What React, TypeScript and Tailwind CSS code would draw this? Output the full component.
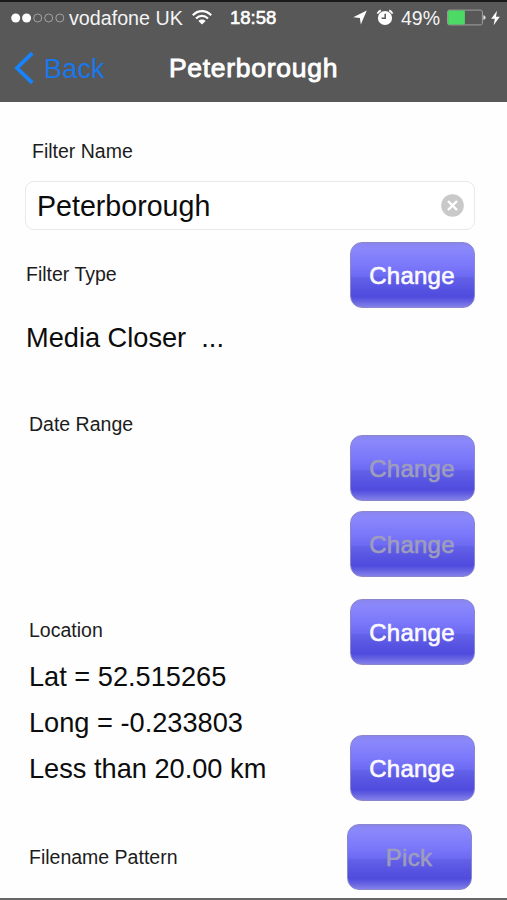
import React, { useState } from 'react';

interface GlossButtonProps {
  label: string;
  disabled?: boolean;
}

const GlossButton: React.FC<GlossButtonProps> = ({ label, disabled }) => (
  <button
    type="button"
    disabled={disabled}
    className={`h-[66px] w-[125px] shrink-0 rounded-[12px] border border-[#8b87cd] bg-[linear-gradient(to_bottom,#8985ee_0%,#8b88fb_8%,#7b78fb_35%,#6e6bf4_51%,#6360e8_55%,#5450e0_76%,#504bdd_84%,#6461e2_91%,#8380ea_100%)] pr-px pt-[2px] text-[24px] leading-none tracking-[0.25px] ${
      disabled
        ? 'text-[#9e9dbd] [-webkit-text-stroke:0.6px_#9e9dbd]'
        : 'text-[#fafaff] [-webkit-text-stroke:0.6px_#fafaff]'
    }`}
  >
    {label}
  </button>
);

const Label: React.FC<{ children: React.ReactNode }> = ({ children }) => (
  <div className="h-[30px] text-[19.5px] leading-[30px] text-[#1c1c1c]">{children}</div>
);

const Value: React.FC<{ children: React.ReactNode }> = ({ children }) => (
  <div className="h-[46px] whitespace-pre text-[27.2px] leading-[46px] text-[#0c0c0c]">{children}</div>
);

const StatusBar: React.FC = () => (
  <div className="flex h-[31px] items-center pl-[11px] pr-[7px] text-[#f4f4f4]">
    <svg className="h-[10px] w-[55px]" viewBox="0 0 55 10">
      <circle cx="4.7" cy="5" r="4.5" fill="#fff" />
      <circle cx="15.6" cy="5" r="4.5" fill="#fff" />
      <circle cx="26.7" cy="5" r="4" fill="none" stroke="#a2a2a2" />
      <circle cx="37.7" cy="5" r="4" fill="none" stroke="#a2a2a2" />
      <circle cx="48.8" cy="5" r="4" fill="none" stroke="#a2a2a2" />
    </svg>
    <span className="ml-[3px] w-[115px] whitespace-nowrap pt-[2px] text-[19.7px] leading-none">vodafone UK</span>
    <svg className="ml-[8px] h-[15px] w-[20px]" viewBox="0 0 20 15" fill="none" stroke="#fff" strokeWidth="2.1">
      <path d="M0.8 5.2 C6 -0.3 14 -0.3 19.2 5.2" />
      <path d="M4 8.6 C7.5 5 12.5 5 16 8.6" />
      <path d="M10 14.4 L6.4 10.9 C8.5 9 11.5 9 13.6 10.9 Z" fill="#fff" stroke="none" />
    </svg>
    <span className="ml-[18px] w-[48px] whitespace-nowrap pt-[2px] text-[18.5px] leading-none text-white [-webkit-text-stroke:0.6px_#ffffff]">
      18:58
    </span>
    <svg className="ml-[75px] h-[15px] w-[14px]" viewBox="0 0 14 15" fill="#fff">
      <path d="M13.8 0.5 L0.2 7.3 L6.9 8 L7.8 14.6 Z" />
    </svg>
    <svg className="ml-[9px] h-[17px] w-[18px]" viewBox="0 0 18 17">
      <circle cx="9" cy="9" r="7.1" fill="#fff" />
      <path d="M1.4 4.6 A9 9 0 0 1 4.8 1.4 M13.2 1.4 A9 9 0 0 1 16.6 4.6" fill="none" stroke="#fff" strokeWidth="1.8" />
      <path d="M9.2 4.8 V9.2 H5.6" fill="none" stroke="#595959" strokeWidth="1.5" />
    </svg>
    <span className="ml-[7px] w-[40px] whitespace-nowrap pt-[2px] text-[19.5px] leading-none">49%</span>
    <svg className="ml-[6px] h-[17px] w-[40px]" viewBox="0 0 40 17">
      <rect x="0.6" y="1.1" width="34.8" height="14.8" rx="1.8" fill="none" stroke="#a0a0a0" />
      <rect x="1.1" y="1.6" width="16.8" height="13.8" rx="0.8" fill="#4cd964" />
      <path d="M36.3 6.2 C39.4 6.4 39.4 10.6 36.3 10.8 Z" fill="#dcdcdc" />
    </svg>
    <svg className="ml-[4px] h-[16px] w-[9px] shrink-0" viewBox="0 0 9 16" fill="#fff">
      <path d="M6 0.8 L0.2 8.8 H3.8 L2.6 15.2 L8.8 6.7 H5 Z" />
    </svg>
  </div>
);

const NavBar: React.FC = () => (
  <div className="mt-px grid h-[68px] grid-cols-[140px_1fr_140px] items-center">
    <button type="button" className="flex items-center pl-[14px] text-[27px] leading-none text-[#1877ea]">
      <svg className="mr-[9px] h-[34px] w-[21px]" viewBox="0 0 21 34">
        <path d="M18.3 2.2 L3 17 L18.3 31.8" fill="none" stroke="#1683ff" strokeWidth="3.8" />
      </svg>
      <span className="pt-[2px] tracking-[0.2px]">Back</span>
    </button>
    <h1 className="whitespace-nowrap pt-px text-center text-[26.5px] leading-none tracking-[0.72px] text-white [-webkit-text-stroke:0.9px_#ffffff]">
      Peterborough
    </h1>
  </div>
);

const App: React.FC = () => {
  const [name, setName] = useState('Peterborough');

  return (
    <div className="flex h-[900px] w-[507px] flex-col overflow-hidden border-b-2 border-[#666666] bg-[#fefefe] font-['Liberation_Sans',Arial,sans-serif]">
      <header className="h-[102px] shrink-0 border-t-2 border-[#1a1a1a] bg-[#585858]">
        <StatusBar />
        <NavBar />
      </header>

      <main className="pl-[25px] pr-[32px] pt-[34px]">
        <div className="pl-[7px]">
          <Label>Filter Name</Label>
        </div>
        <div className="mt-[15px] flex h-[49px] items-center rounded-[9px] border border-[#e9e9e9] bg-white pl-[11px] pr-[10px]">
          <input
            className="h-[46px] w-full min-w-0 bg-transparent pt-px text-[28.6px] leading-[45px] text-[#0c0c0c] outline-none"
            value={name}
            onChange={(e) => setName(e.target.value)}
          />
          <button type="button" aria-label="Clear" onClick={() => setName('')}>
            <svg className="block h-[23px] w-[23px]" viewBox="0 0 23 23">
              <circle cx="11.5" cy="11.5" r="11.3" fill="#c9c9c9" />
              <path d="M7 7 L16 16 M16 7 L7 16" stroke="#fff" strokeWidth="2.4" />
            </svg>
          </button>
        </div>

        <section className="mt-[12px] flex h-[193px] items-start justify-between">
          <div className="pl-px pt-[17px]">
            <Label>Filter Type</Label>
            <div className="mt-[26px]">
              <Value>{'Media Closer  ...'}</Value>
            </div>
          </div>
          <GlossButton label="Change" />
        </section>

        <section className="flex h-[164px] items-start justify-between">
          <div className="-mt-[26px] pl-[4px]">
            <Label>Date Range</Label>
          </div>
          <div className="flex flex-col gap-[10px]">
            <GlossButton label="Change" disabled />
            <GlossButton label="Change" disabled />
          </div>
        </section>

        <section className="flex h-[225px] items-start justify-between">
          <div className="pl-[4px] pt-[16px]">
            <Label>Location</Label>
            <div className="mt-[9px]">
              <Value>Lat = 52.515265</Value>
              <Value>Long = -0.233803</Value>
              <Value>Less than 20.00 km</Value>
            </div>
          </div>
          <div className="flex flex-col gap-[70px]">
            <GlossButton label="Change" />
            <GlossButton label="Change" />
          </div>
        </section>

        <section className="flex items-center justify-between pl-[4px] pr-[3px]">
          <Label>Filename Pattern</Label>
          <GlossButton label="Pick" disabled />
        </section>
      </main>
    </div>
  );
};

export default App;
